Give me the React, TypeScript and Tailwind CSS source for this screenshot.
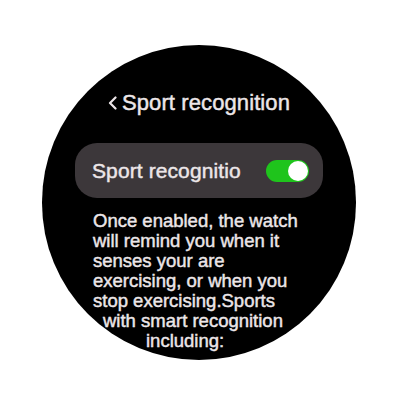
const LINES = [
  { text: 'Once enabled, the watch', pad: 'pl-0' },
  { text: 'will remind you when it', pad: 'pl-0' },
  { text: 'senses your are', pad: 'pl-0' },
  { text: 'exercising, or when you', pad: 'pl-0' },
  { text: 'stop exercising.Sports', pad: 'pl-0' },
  { text: 'with smart recognition', pad: 'pl-[10px]' },
  { text: 'including:', pad: 'pl-[53px]' },
];

export default function App() {
  return (
    <div className="w-[400px] h-[400px] bg-white overflow-hidden font-['Liberation_Sans',Arial,sans-serif]">
      <div className="mt-[45px] ml-[42px] w-[314px] h-[315px] rounded-full bg-black overflow-hidden flex flex-col text-[#ece6e8] [-webkit-text-stroke:0.45px_#ece6e8]">
        {/* Header */}
        <div className="flex items-center mt-[46px] ml-[66px] h-[24px]">
          <svg width="10" height="14" viewBox="0 0 10 14" className="mr-[4px]">
            <path d="M7.5 1.5 L2 7 L7.5 12.5" fill="none" stroke="#ece6e8" strokeWidth="2.2" strokeLinecap="round" strokeLinejoin="round" />
          </svg>
          <span className="text-[22px] leading-[24px] tracking-[0.1px]">Sport recognition</span>
        </div>

        {/* Toggle card */}
        <div className="mt-[28px] ml-[33px] w-[248px] h-[55px] rounded-[22px] bg-[#3c373a] flex items-center pl-[17px] pr-[14px]">
          <span className="flex-1 text-[21px] leading-[24px] tracking-[0.1px]">Sport recognitio</span>
          <div className="w-[43px] h-[22px] rounded-full bg-[#1fc41c] flex items-center justify-end pr-[1px]">
            <div className="w-[20px] h-[20px] rounded-full bg-white" />
          </div>
        </div>

        {/* Description */}
        <div className="mt-[13px] ml-[51px] text-[18.5px] leading-[20px]">
          {LINES.map((l) => (
            <div key={l.text} className={`${l.pad} whitespace-nowrap`}>{l.text}</div>
          ))}
        </div>
      </div>
    </div>
  );
}
